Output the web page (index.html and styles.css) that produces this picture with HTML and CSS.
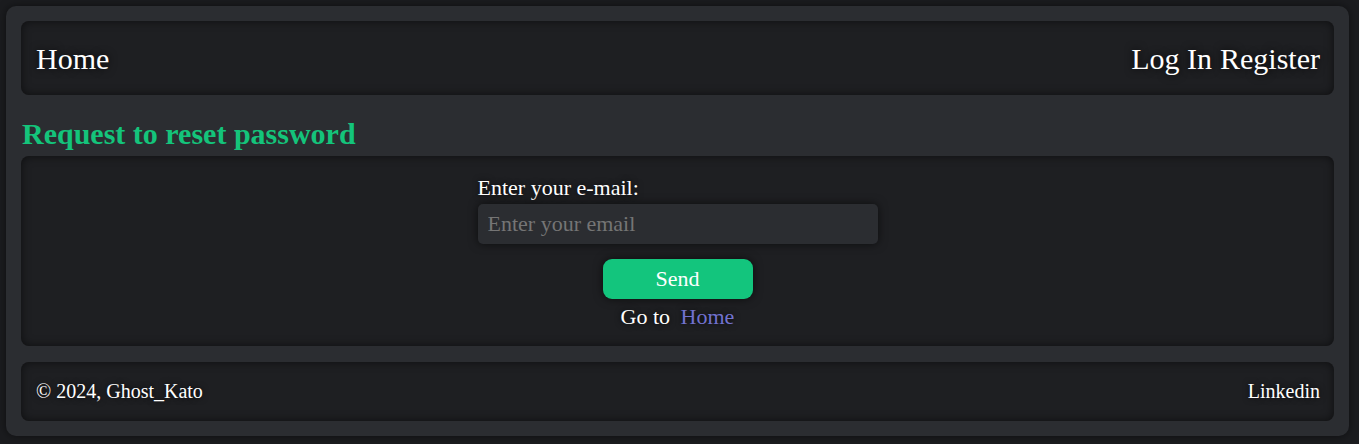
FILE: index.html
```html
<!DOCTYPE html>
<html lang="en">
<head>
<meta charset="utf-8">
<title>Request to reset password</title>
<link rel="stylesheet" href="styles.css">
</head>
<body>
<div class="shell">
  <header class="panel nav">
    <a class="nav-link" href="#">Home</a>
    <div class="nav-right">
      <a class="nav-link" href="#">Log In</a>
      <a class="nav-link" href="#">Register</a>
    </div>
  </header>
  <h2 class="title">Request to reset password</h2>
  <main class="panel content">
    <form class="form">
      <label class="label" for="email">Enter your e-mail:</label>
      <input class="input" id="email" type="email" placeholder="Enter your email">
      <button class="btn" type="button">Send</button>
      <p class="goto">Go to <a class="link" href="#">Home</a></p>
    </form>
  </main>
  <footer class="panel footer">
    <span class="foot-text">© 2024, Ghost_Kato</span>
    <a class="foot-text" href="#">Linkedin</a>
  </footer>
</div>
</body>
</html>
```
FILE: styles.css
```css
html, body {
  margin: 0;
  background: #1b1c1f;
}
body {
  padding: 6px 10px 8px 6px;
  font-family: "Liberation Serif", "Times New Roman", serif;
  color: #ffffff;
}
.shell {
  background: #2b2d31;
  border-radius: 10px;
  padding: 15px;
  box-shadow: 0 0 8px rgba(0,0,0,0.5);
}
.panel {
  background: #1e1f22;
  border-radius: 8px;
  box-shadow: inset 0 0 10px rgba(0,0,0,0.55);
}
.nav {
  display: flex;
  justify-content: space-between;
  align-items: center;
  height: 74px;
  box-sizing: border-box;
  padding: 1px 14px 0 15px;
}
.nav-right {
  display: flex;
  gap: 8px;
}
.nav-link {
  color: #ffffff;
  text-decoration: none;
  font-size: 30px;
  text-shadow: 0 0 8px rgba(0,0,0,0.9);
}
.title {
  margin: 22px 0 6px 1px;
  font-size: 30px;
  font-weight: bold;
  color: #14c47b;
  line-height: 33px;
}
.content {
  display: flex;
  justify-content: center;
  padding: 19px 0 17px;
}
.form {
  width: 400px;
  display: flex;
  flex-direction: column;
  align-items: center;
}
.label {
  align-self: flex-start;
  font-size: 22px;
  line-height: 25px;
  margin-bottom: 4px;
  text-shadow: 0 0 6px rgba(0,0,0,0.8);
}
.input {
  width: 100%;
  height: 40px;
  box-sizing: border-box;
  border: none;
  border-radius: 5px;
  background: #2b2d31;
  color: #ffffff;
  font-family: inherit;
  font-size: 22px;
  padding: 0 10px;
  box-shadow: 0 0 10px rgba(0,0,0,0.6);
  outline: none;
}
.input::placeholder {
  color: #757575;
}
.btn {
  margin-top: 15px;
  width: 150px;
  height: 40px;
  border: none;
  border-radius: 9px;
  background: #13c57d;
  color: #ffffff;
  font-family: inherit;
  font-size: 22px;
  box-shadow: 0 0 10px rgba(0,0,0,0.6);
  cursor: pointer;
}
.goto {
  margin: 5px 0 0;
  font-size: 22px;
  line-height: 25px;
  text-shadow: 0 0 6px rgba(0,0,0,0.8);
}
.link {
  color: #7272cf;
  text-decoration: none;
  margin-left: 5px;
}
.footer {
  margin-top: 16px;
  display: flex;
  justify-content: space-between;
  align-items: center;
  height: 59px;
  box-sizing: border-box;
  padding: 0 14px 0 15px;
}
.foot-text {
  color: #ffffff;
  text-decoration: none;
  font-size: 20px;
  text-shadow: 0 0 6px rgba(0,0,0,0.8);
}
```
